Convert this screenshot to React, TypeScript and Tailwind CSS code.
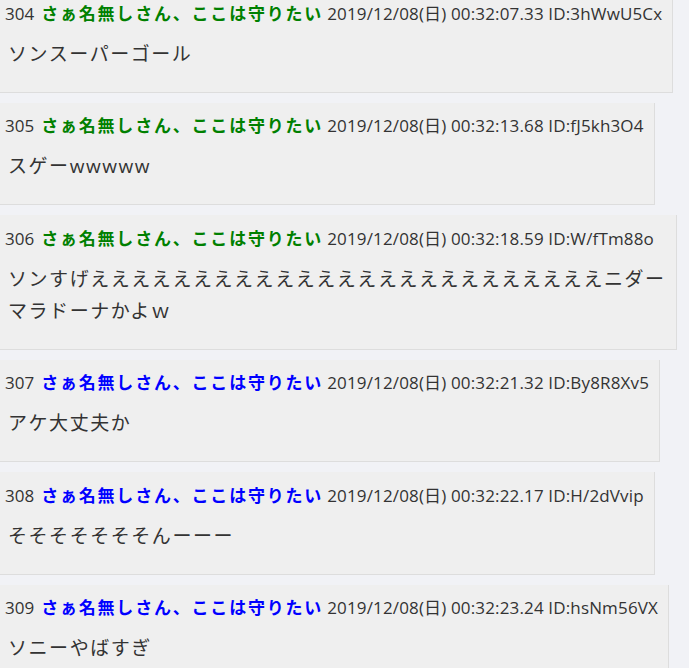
import React from 'react';

type Post = {
  num: number;
  color: 'green' | 'blue';
  date: string;
  id: string;
  lines: string[];
};

const posts: Post[] = [
  { num: 304, color: 'green', date: '2019/12/08(日) 00:32:07.33', id: 'ID:3hWwU5Cx', lines: ['ソンスーパーゴール'] },
  { num: 305, color: 'green', date: '2019/12/08(日) 00:32:13.68', id: 'ID:fJ5kh3O4', lines: ['スゲーwwwww'] },
  {
    num: 306,
    color: 'green',
    date: '2019/12/08(日) 00:32:18.59',
    id: 'ID:W/fTm88o',
    lines: ['ソンすげ' + 'え'.repeat(25) + 'ニダー', 'マラドーナかよｗ'],
  },
  { num: 307, color: 'blue', date: '2019/12/08(日) 00:32:21.32', id: 'ID:By8R8Xv5', lines: ['アケ大丈夫か'] },
  { num: 308, color: 'blue', date: '2019/12/08(日) 00:32:22.17', id: 'ID:H/2dVvip', lines: ['そそそそそそそんーーー'] },
  { num: 309, color: 'blue', date: '2019/12/08(日) 00:32:23.24', id: 'ID:hsNm56VX', lines: ['ソニーやばすぎ'] },
];

const App = () => {
  return (
    <div
      className="min-h-[668px] bg-[#f1f2f6] overflow-hidden text-[#333]"
      style={{ fontFamily: '"Open Sans", "Noto Sans CJK JP", sans-serif' }}
    >
      <div className="-mt-[10px] flex flex-col items-start gap-[10px]">
        {posts.map((p) => (
          <div
            key={p.num}
            className="w-fit bg-[#efefef] border-r border-b border-[#dddddd] pt-[9.5px] pb-[22px] pl-[5px] pr-[10px]"
          >
            <div className="h-[28px] text-[17px] leading-[28px] whitespace-nowrap">
              <span className="mr-[7px]">{p.num}</span>
              <span
                className={
                  p.color === 'green'
                    ? 'font-bold text-[#008000] tracking-[1.8px]'
                    : 'font-bold text-[#0000ff] tracking-[1.8px]'
                }
              >
                さぁ名無しさん、ここは守りたい
              </span>
              <span className="ml-[4px] tracking-[0.15px]">
                {p.date} {p.id}
              </span>
            </div>
            <div className="mt-[10px] pl-[3px] text-[19px] leading-[32px] tracking-[1.55px]">
              {p.lines.map((l, i) => (
                <div key={i} className="h-[32px] whitespace-nowrap">
                  {l}
                </div>
              ))}
            </div>
          </div>
        ))}
      </div>
    </div>
  );
};

export default App;
